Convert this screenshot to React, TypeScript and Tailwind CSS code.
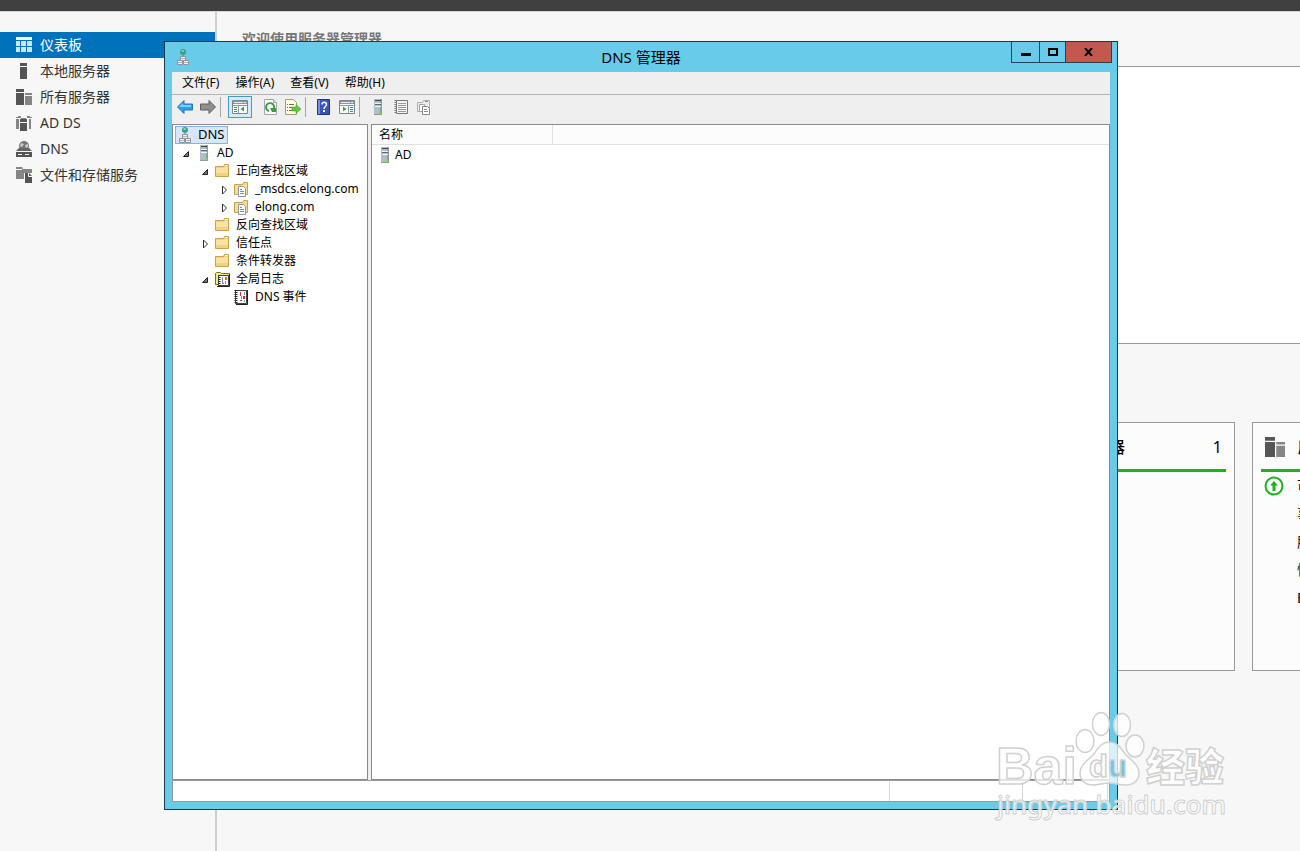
import React from 'react';

function DashboardIcon() {
  return (
    <svg width="16" height="16" viewBox="0 0 16 16" fill="#cfe4f3">
      <path d="M0 0h16v3H0z" fill="#fff" />
      <path d="M0 4h4v5H0zM5 4h5v5H5zM11 4h5v5h-5zM0 10h4v5H0zM5 10h5v5H5zM11 10h5v5h-5z" />
    </svg>
  );
}

function LocalServerIcon() {
  return (
    <svg width="16" height="16" viewBox="0 0 16 16" fill="#555">
      <path d="M4 0h7v3H4zM4 4h7v12H4z" />
    </svg>
  );
}

function AllServersIcon({ size = 16 }: { size?: number }) {
  return (
    <svg width={size} height={size} viewBox="0 0 16 16">
      <path d="M0 0h8v3H0zM0 4h8v12H0z" fill="#555" />
      <path d="M9 4h7v2H9zM9 7h7v9H9z" fill="#858585" />
    </svg>
  );
}

function AdDsIcon() {
  return (
    <svg width="16" height="16" viewBox="0 0 16 16">
      <path d="M0 2h2V1h3v2H0zM0 4h3v10H0zM11 1h3v1h2v1h-5zM13 4h2v10h-2z" fill="#858585" />
      <path d="M4 4h7v3H4zM4 8h7v8H4z" fill="#555" />
      <path d="M5 3h5v1H5z" fill="#858585" />
    </svg>
  );
}

function DnsIcon() {
  return (
    <svg width="16" height="16" viewBox="0 0 16 16">
      <circle cx="8" cy="5" r="5" fill="#777" />
      <path d="M5 2l3 1-2 3-2-1zM9 4l3-1v3l-2 1z" fill="#ccc" />
      <path d="M3 7h10l3 3H0z" fill="#666" />
      <path d="M0 11h16v5H0z" fill="#555" />
      <path d="M2 13h4v1H2zM9 13h4v1H9z" fill="#eee" />
    </svg>
  );
}

function FileStorageIcon() {
  return (
    <svg width="16" height="16" viewBox="0 0 16 16">
      <path d="M0 0h6l1 2h9v4H8v6H0z" fill="#858585" />
      <path d="M0 2.500h6" stroke="#f7f7f7" />
      <path d="M9 6h4l3 3v7H9z" fill="#555" />
      <path d="M12.500 6v3.500H16" fill="none" stroke="#f7f7f7" />
    </svg>
  );
}

function DnsRootIcon() {
  return (
    <svg width="16" height="16" viewBox="0 0 16 16">
      <circle cx="7" cy="3" r="3" fill="#3a9e8e" />
      <path d="M5 2l2-1 1 1-1 1z" fill="#a6e8c2" />
      <path d="M7 6v2" stroke="#777" />
      <path d="M4.500 7.500h5v4h-5zM1.500 11.500h5v4h-5zM7.500 11.500h5v4h-5z" fill="#eef0f3" stroke="#90959c" />
      <path d="M5 9.500h4M2 13.500h4M8 13.500h4" stroke="#b0b5bb" />
    </svg>
  );
}

function ServerIcon() {
  return (
    <svg width="16" height="16" viewBox="0 0 16 16">
      <path d="M4 0h8v16H4z" fill="#8d9ba3" />
      <path d="M4 0h6v15H4z" fill="#afbec6" />
      <path d="M5 1.500h6" stroke="#444" />
      <path d="M5 4.500h6M5 7.500h6" stroke="#eef3f5" />
      <path d="M5 5.500h6" stroke="#5f6b72" />
      <path d="M9 13h2v2H9z" fill="#7be03c" />
    </svg>
  );
}

function FolderIcon() {
  return (
    <svg width="16" height="16" viewBox="0 0 16 16">
      <path d="M.5 3.500h8l1-2h4v12H.5z" fill="#f2d27c" stroke="#c9a24a" />
      <path d="M1 5h8l1-1h3v9H1z" fill="#fae3a0" />
      <path d="M1 10h12v3H1z" fill="#f3d27d" />
      <path d="M10 2.500h3" stroke="#fff8dc" />
    </svg>
  );
}

function ZoneIcon() {
  return (
    <svg width="16" height="16" viewBox="0 0 16 16">
      <path d="M.5 3.500h8l1-2h4v12H.5z" fill="#f7dc90" stroke="#c9a24a" />
      <path d="M4.500 5.500h5l2 2v8h-7z" fill="#fff" stroke="#8b98a5" />
      <path d="M6 8.500h2M6 10.500h4M6 12.500h4" stroke="#6a8cae" />
    </svg>
  );
}

function GlobalLogIcon() {
  return (
    <svg width="16" height="16" viewBox="0 0 16 16">
      <path d="M.5 2.500l1-1h4l1 1h8v11H.5z" fill="#f4ea84" stroke="#77721c" />
      <path d="M3.500 4.500h10v10h-10z" fill="#fff" stroke="#444" />
      <path d="M14.500 3v12.500H2" fill="none" stroke="#222" />
      <path d="M4.500 4v11" stroke="#222" strokeWidth="2" strokeDasharray="1 1" />
      <path d="M7.500 6v6M10.500 10v3" stroke="#7d87cf" />
      <path d="M11 6v3M8 12v1" stroke="#d9606a" strokeWidth="2" />
    </svg>
  );
}

function EventLogIcon() {
  return (
    <svg width="16" height="16" viewBox="0 0 16 16">
      <path d="M1.500 1.500h11v13h-11z" fill="#fff" stroke="#444" />
      <path d="M2 1v14" stroke="#222" strokeWidth="3" strokeDasharray="1 1" />
      <path d="M13.500 1v14.500H2" fill="none" stroke="#222" />
      <path d="M6 3h1v4H6zM9 7h2v3H9zM6 11h2v1H6z" fill="#c72b35" />
      <path d="M10.500 3v3M7.500 7v3M10.500 11v2" stroke="#7d87cf" />
    </svg>
  );
}

function ArrowIcon({ forward = false }: { forward?: boolean }) {
  return (
    <svg width="16" height="16" viewBox="0 0 16 16">
      {forward ? (
        <path d="M15.500 8L9 1.500V5H.5v6H9v3.500z" fill="#8f8f8f" stroke="#5f5f5f" />
      ) : (
        <>
          <path d="M.5 8L7 1.500V5h8.500v6H7v3.500z" fill="#2e9fe6" stroke="#2376b8" />
          <path d="M2 8l4-4v2h8v2z" fill="#7fd0f7" />
        </>
      )}
    </svg>
  );
}

function TreePaneIcon() {
  return (
    <svg width="16" height="14" viewBox="0 0 16 14">
      <path d="M.5.5h15v13H.5z" fill="#fff" stroke="#7b858f" />
      <path d="M1 1h14v3H1z" fill="#8996a3" />
      <path d="M2 2.500h9M12 2.500h2" stroke="#e7ecf0" />
      <path d="M6.500 5v8M1 5.500h14" stroke="#8996a3" />
      <path d="M2 7.500h3M2 9.500h3M2 11.500h3" stroke="#4f81b5" />
      <path d="M12 6.500v5L8.500 9z" fill="#39a433" />
    </svg>
  );
}

function ActionPaneIcon() {
  return (
    <svg width="16" height="14" viewBox="0 0 16 14">
      <path d="M.5.5h15v13H.5z" fill="#fff" stroke="#7b858f" />
      <path d="M1 1h14v3H1z" fill="#8996a3" />
      <path d="M2 2.500h9M12 2.500h2" stroke="#e7ecf0" />
      <path d="M9.500 5v8M1 5.500h14" stroke="#8996a3" />
      <path d="M11 7.500h3M11 9.500h3M11 11.500h3" stroke="#4f81b5" />
      <path d="M4 6.500v5L7.500 9z" fill="#39a433" />
    </svg>
  );
}

function RefreshIcon() {
  return (
    <svg width="16" height="16" viewBox="0 0 16 16">
      <path d="M2.500.5h9l3 3v12h-12z" fill="#fff" stroke="#a0a6ac" />
      <path d="M11.500.5v3h3" fill="#e5e8eb" stroke="#a0a6ac" />
      <path d="M7 12a4 4 0 1 1 5-3" fill="none" stroke="#3aa13a" strokeWidth="2" />
      <path d="M8 9h6v4h-4z" fill="#3aa13a" />
    </svg>
  );
}

function ExportIcon() {
  return (
    <svg width="16" height="16" viewBox="0 0 16 16">
      <path d="M.5.500h8l3 3v12H.5z" fill="#fffbe0" stroke="#a39d78" />
      <path d="M2 5.500h1M4 5.500h5M2 8.500h1M4 8.500h3M2 11.500h1M4 11.500h4" stroke="#6d6d6d" />
      <path d="M7 8h4V5.500L16 10l-5 4.500V12H7z" fill="#65c83b" stroke="#3d9a25" strokeWidth=".5" />
    </svg>
  );
}

function HelpIcon() {
  return (
    <svg width="16" height="16" viewBox="0 0 16 16">
      <path d="M2.500.5h12v15h-12z" fill="#3a55b8" stroke="#24357d" />
      <path d="M3 1h2v14H3z" fill="#7890dc" />
      <path d="M7 5.500C7 2.500 11.500 2.500 11.500 5.500c0 2-2.500 2-2.500 4.500" fill="none" stroke="#fff" strokeWidth="1.500" />
      <path d="M8 11h2v2H8z" fill="#fff" />
    </svg>
  );
}

function NotebookIcon() {
  return (
    <svg width="16" height="16" viewBox="0 0 16 16">
      <path d="M3.500 1.500h11v13h-11z" fill="#f3f3f3" stroke="#777" />
      <path d="M5 4.500h8M5 6.500h8M5 8.500h8M5 10.500h8M5 12.500h8" stroke="#999" />
      <path d="M2.500 1v14" stroke="#777" strokeWidth="2" strokeDasharray="1 1" />
    </svg>
  );
}

function ZonesIcon() {
  return (
    <svg width="16" height="16" viewBox="0 0 16 16">
      <path d="M1.500 3.500h5l1-2h6v11h-12z" fill="#ececec" stroke="#b0b0b0" />
      <path d="M3.500 5.500h5v7h-5z" fill="#fff" stroke="#a5a5a5" />
      <path d="M6.500 7.500h5l2 2v6h-7z" fill="#fff" stroke="#888" />
      <path d="M8 10.500h3M8 12.500h4" stroke="#888" />
      <path d="M9 2.500h3" stroke="#888" />
    </svg>
  );
}

function Expander({ open }: { open: boolean }) {
  return (
    <svg width="9" height="10" viewBox="0 0 9 10">
      {open ? (
        <path d="M6.500 3.500v5h-5z" fill="#777" stroke="#222" />
      ) : (
        <path d="M2.500 2l4 4-4 4z" fill="#fff" stroke="#333" />
      )}
    </svg>
  );
}

const navItems = [
  { label: '仪表板', icon: <DashboardIcon />, active: true },
  { label: '本地服务器', icon: <LocalServerIcon /> },
  { label: '所有服务器', icon: <AllServersIcon /> },
  { label: 'AD DS', icon: <AdDsIcon /> },
  { label: 'DNS', icon: <DnsIcon /> },
  { label: '文件和存储服务', icon: <FileStorageIcon /> },
];

const treeItems = [
  { label: 'AD', indent: 'pl-1', icon: <ServerIcon />, open: true },
  { label: '正向查找区域', indent: 'pl-[23px]', icon: <FolderIcon />, open: true },
  { label: '_msdcs.elong.com', indent: 'pl-[42px]', icon: <ZoneIcon />, open: false },
  { label: 'elong.com', indent: 'pl-[42px]', icon: <ZoneIcon />, open: false },
  { label: '反向查找区域', indent: 'pl-[23px]', icon: <FolderIcon /> },
  { label: '信任点', indent: 'pl-[23px]', icon: <FolderIcon />, open: false },
  { label: '条件转发器', indent: 'pl-[23px]', icon: <FolderIcon /> },
  { label: '全局日志', indent: 'pl-[23px]', icon: <GlobalLogIcon />, open: true },
  { label: 'DNS 事件', indent: 'pl-[42px]', icon: <EventLogIcon /> },
];

function ToolButton({ label, children }: { label: string; children: React.ReactNode }) {
  return (
    <button aria-label={label} className="flex h-4 w-4 items-center justify-center">
      {children}
    </button>
  );
}

function Separator() {
  return <span className="ml-1 mr-[7px] h-5 w-px bg-[#a5a5a5]" />;
}

function Sidebar() {
  return (
    <nav className="w-[217px] shrink-0 border-r-2 border-[#cecece] pt-5">
      {navItems.map((item) => (
        <a
          key={item.label}
          href="#"
          className={`flex h-[26px] items-center gap-2 pl-4 text-sm ${item.active ? 'bg-[#0072bc] text-white' : 'text-[#333]'}`}
        >
          {item.icon}
          {item.label}
        </a>
      ))}
    </nav>
  );
}

function Tile({ title, icon, children }: { title: string; icon: React.ReactNode; children?: React.ReactNode }) {
  return (
    <section className="h-[249px] w-[236px] shrink-0 border border-[#999] bg-[#fcfcfc] px-2">
      <div className="flex h-[49px] items-center gap-[13px] border-b-3 border-[#1cb41c] px-1 pt-px">
        <span className="flex w-5 justify-center">{icon}</span>
        <h3 className="flex-1 text-base font-medium">{title}</h3>
        <span className="text-base">1</span>
      </div>
      {children}
    </section>
  );
}

function Dashboard() {
  return (
    <main className="min-w-0 flex-1 overflow-hidden">
      <h1 className="h-[54px] pl-[25px] pt-[17px] text-sm font-bold leading-5 text-[#777]">欢迎使用服务器管理器</h1>
      <div className="ml-6 h-[278px] border-y border-[#999] bg-white" />
      <div className="ml-[782px] mt-[78px] flex gap-[17px]">
        <Tile title="本地服务器" icon={<LocalServerIcon />} />
        <Tile title="所有服务器" icon={<AllServersIcon size={20} />}>
          <div className="flex gap-[13px] pl-[3px] text-sm leading-7">
            <svg width="20" height="20" viewBox="0 0 20 20" className="mt-1 shrink-0">
              <circle cx="10" cy="10" r="8.500" fill="#fff" stroke="#1cb41c" strokeWidth="2" />
              <path d="M10 5l4 4.500h-2.500V15h-3V9.500H6z" fill="#1cb41c" />
            </svg>
            <ul>
              <li>可管理性</li>
              <li>事件</li>
              <li>服务</li>
              <li>性能</li>
              <li>BPA 结果</li>
            </ul>
          </div>
        </Tile>
      </div>
    </main>
  );
}

function DnsManager() {
  return (
    <div className="absolute bottom-[41px] left-[164px] right-[182px] top-[41px] flex flex-col border border-[#1d3a47] bg-[#67cbe9] px-[7px] pb-[7px] text-xs text-black">
      <header className="relative flex h-[30px] shrink-0 items-center pl-1">
        <DnsRootIcon />
        <h2 className="flex-1 pr-5 text-center text-[15px]">DNS 管理器</h2>
        <div className="absolute -right-[2px] top-0 flex h-[21px] divide-x divide-[#25424d] border-x border-b border-[#25424d]">
          <button aria-label="最小化" className="flex w-7 items-center justify-center">
            <span className="mt-1 h-[3px] w-[10px] bg-black" />
          </button>
          <button aria-label="最大化" className="flex w-[26px] items-center justify-center">
            <span className="h-2 w-[10px] border-2 border-black" />
          </button>
          <button aria-label="关闭" className="flex w-[45px] items-center justify-center bg-[#c1594f]">
            <svg width="9" height="8" viewBox="0 0 9 8">
              <path d="M1 0l7 8M8 0L1 8" stroke="#000" strokeWidth="2" />
            </svg>
          </button>
        </div>
      </header>

      <div className="flex h-[23px] shrink-0 items-center gap-4 border-b border-[#b4b4b4] bg-[#efefef] pl-[10px]">
        <button>文件(F)</button>
        <button>操作(A)</button>
        <button>查看(V)</button>
        <button>帮助(H)</button>
      </div>

      <div className="flex h-[29px] shrink-0 items-center bg-[#efefef] pb-[5px] pl-[5px]">
        <div className="flex gap-[7px]">
          <ToolButton label="后退"><ArrowIcon /></ToolButton>
          <ToolButton label="前进"><ArrowIcon forward /></ToolButton>
        </div>
        <Separator />
        <button aria-label="显示控制台树" className="flex h-[22px] w-6 items-center justify-center border border-[#3c9fd0] bg-[#d5ecf8]">
          <TreePaneIcon />
        </button>
        <div className="flex gap-[7px] pl-[10px]">
          <ToolButton label="刷新"><RefreshIcon /></ToolButton>
          <ToolButton label="导出列表"><ExportIcon /></ToolButton>
        </div>
        <Separator />
        <div className="flex gap-2 pl-[2px]">
          <ToolButton label="帮助"><HelpIcon /></ToolButton>
          <ToolButton label="显示操作窗格"><ActionPaneIcon /></ToolButton>
        </div>
        <Separator />
        <div className="flex gap-[7px] pl-[3px]">
          <ToolButton label="新建服务器"><ServerIcon /></ToolButton>
          <ToolButton label="筛选"><NotebookIcon /></ToolButton>
          <ToolButton label="新建区域"><ZonesIcon /></ToolButton>
        </div>
      </div>

      <div className="flex min-h-0 flex-1 gap-[3px] bg-[#efefef]">
        <div className="w-[196px] shrink-0 border border-[#858b91] bg-white pt-px">
          <button className="ml-[2px] flex h-[18px] items-center gap-1 border border-[#86b3e0] bg-[#d8e7f7] px-[2px] text-[13px]">
            <DnsRootIcon />
            DNS
          </button>
          <ul>
            {treeItems.map((item) => (
              <li key={item.label} className={`flex h-[18px] items-center whitespace-nowrap ${item.indent}`}>
                <span className="flex w-[19px] shrink-0 justify-center">
                  {item.open !== undefined && <Expander open={item.open} />}
                </span>
                {item.icon}
                <span className="ml-[5px]">{item.label}</span>
              </li>
            ))}
          </ul>
        </div>
        <div className="min-w-0 flex-1 border border-[#858b91] bg-white">
          <table className="w-full text-left">
            <thead>
              <tr className="h-[19px] border-b border-[#e0e0e0] bg-[#fcfcfc]">
                <th className="w-[180px] border-r border-[#e0e0e0] p-0 pl-[7px] pt-px font-normal">名称</th>
                <th className="p-0" />
              </tr>
            </thead>
            <tbody>
              <tr>
                <td className="p-0 pl-[5px] pt-px">
                  <span className="flex h-[18px] items-center gap-[2px]">
                    <ServerIcon />
                    AD
                  </span>
                </td>
                <td />
              </tr>
            </tbody>
          </table>
        </div>
      </div>

      <footer className="flex h-[22px] shrink-0 justify-end border border-[#999] bg-white pr-px">
        <span className="w-[133px] border-l border-[#d5d5d5]" />
        <span className="w-[86px] border-x border-[#d5d5d5]" />
      </footer>
    </div>
  );
}

function Watermark() {
  return (
    <svg
      width="240"
      height="120"
      viewBox="0 0 240 120"
      className="pointer-events-none absolute bottom-[21px] right-[66px]"
      fill="#fff"
      fillOpacity="0.75"
      stroke="#d0d0d0"
      strokeWidth="1.500"
      strokeLinejoin="round"
    >
      <ellipse cx="91" cy="31" rx="9" ry="11.500" />
      <ellipse cx="107" cy="14" rx="8.500" ry="11.500" />
      <ellipse cx="128" cy="15" rx="8.500" ry="11.500" />
      <ellipse cx="141" cy="36" rx="9" ry="11" />
      <path d="M115 32c9 0 12 7 17 13 6 6 13 10 13 18 0 8-6 12-14 12-6 0-10-2-16-2s-10 2-16 2c-8 0-13-5-13-12 0-8 7-12 13-18 5-6 8-13 16-13z" />
      <text x="2" y="74" fontSize="52" fontWeight="bold" className="font-['Liberation_Sans']">Bai</text>
      <text x="95" y="67" fontSize="31" fontWeight="bold" className="font-['Liberation_Sans']">
        d<tspan fill="#67cbe9" fillOpacity="1">u</tspan>
      </text>
      <text x="152" y="71" fontSize="39" fontWeight="900" className="font-['Noto_Sans_CJK_SC']">经验</text>
      <text x="3" y="104" fontSize="26" fontWeight="500" strokeWidth="1" className="font-['Noto_Sans']">jingyan.baidu.com</text>
    </svg>
  );
}

export default function App() {
  return (
    <div className="relative flex min-h-screen flex-col overflow-hidden bg-[#f7f7f7] font-['Noto_Sans','Noto_Sans_CJK_SC',sans-serif]">
      <div className="h-3 border-b border-[#d5d5d5] bg-[#404040]" />
      <div className="flex flex-1">
        <Sidebar />
        <Dashboard />
      </div>
      <DnsManager />
      <Watermark />
    </div>
  );
}
